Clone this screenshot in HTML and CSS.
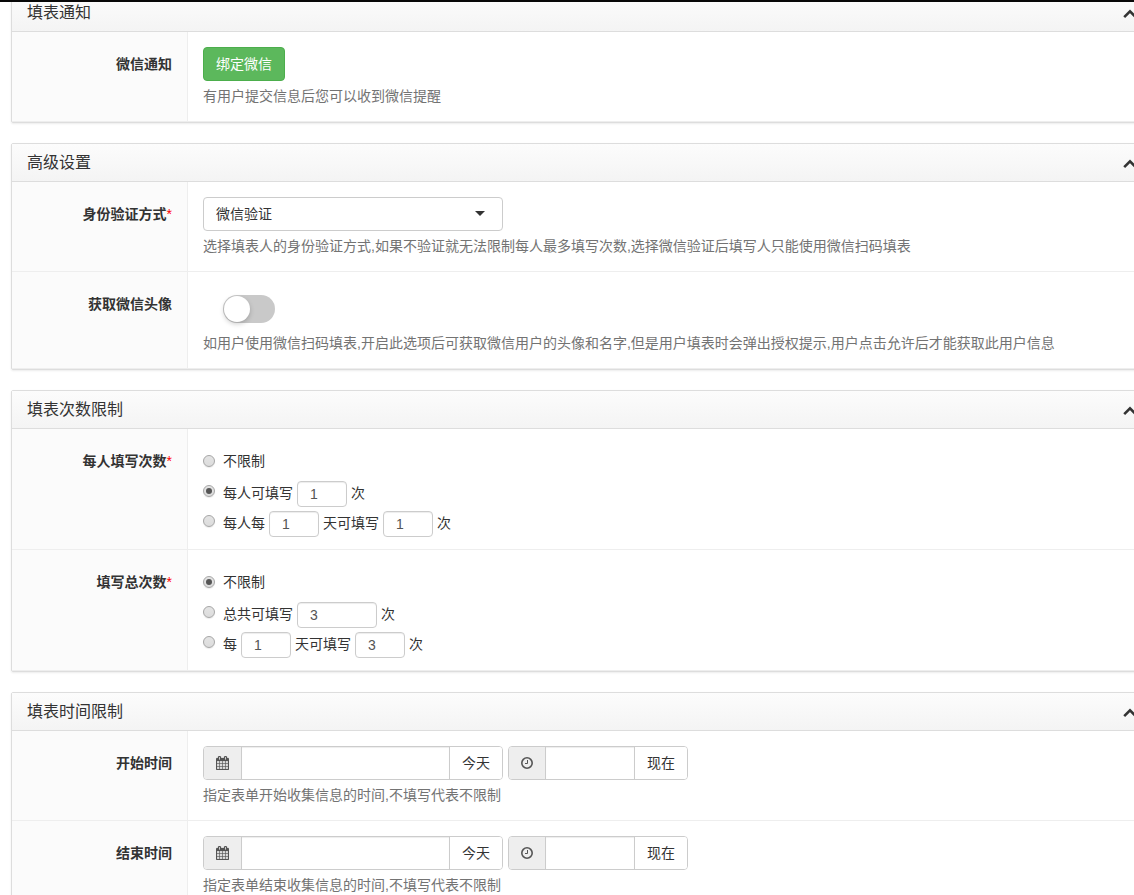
FILE: index.html
```html
<!DOCTYPE html>
<html lang="zh-CN">
<head>
<meta charset="utf-8">
<title>表单设置</title>
<link rel="stylesheet" href="styles.css">
</head>
<body>
<svg class="sprite" aria-hidden="true">
  <symbol id="chevron" viewBox="0 0 14 10"><path d="M1.2 8.2 7 2.4l5.8 5.8" fill="none" stroke="currentColor" stroke-width="2.6"/></symbol>
  <symbol id="calendar" viewBox="0 0 1664 1792"><path fill="currentColor" stroke="currentColor" stroke-width="30" d="M128 1664h288v-288h-288v288zm352 0h320v-288h-320v288zm-352-352h288v-320h-288v320zm352 0h320v-320h-320v320zm-352-384h288v-288h-288v288zm736 736h320v-288h-320v288zm-384-736h320v-288h-320v288zm768 736h288v-288h-288v288zm-384-352h320v-320h-320v320zm-352-864v-288q0-13-9.5-22.5t-22.5-9.5h-64q-13 0-22.5 9.5t-9.5 22.5v288q0 13 9.5 22.5t22.5 9.5h64q13 0 22.5-9.5t9.5-22.5zm736 864h288v-320h-288v320zm-384-384h320v-288h-320v288zm384 0h288v-288h-288v288zm32-480v-288q0-13-9.5-22.5t-22.5-9.5h-64q-13 0-22.5 9.5t-9.5 22.5v288q0 13 9.5 22.5t22.5 9.5h64q13 0 22.5-9.5t9.5-22.5zm384-64v1280q0 52-38 90t-90 38h-1408q-52 0-90-38t-38-90v-1280q0-52 38-90t90-38h128v-96q0-66 47-113t113-47h64q66 0 113 47t47 113v96h384v-96q0-66 47-113t113-47h64q66 0 113 47t47 113v96h128q52 0 90 38t38 90z"/></symbol>
  <symbol id="clock" viewBox="0 0 12 12"><circle cx="6" cy="6" r="5.2" fill="none" stroke="currentColor" stroke-width="1.6"/><path d="M6.5 3v3.5H4" fill="none" stroke="currentColor" stroke-width="1"/></symbol>
</svg>
<div class="topbar"></div>
<main class="settings">
  <section class="panel">
    <header class="panel-head"><h2>填表通知</h2><button class="fold" type="button" aria-label="收起"><svg><use href="#chevron"/></svg></button></header>
    <div class="row">
      <div class="name">微信通知</div>
      <div class="field">
        <button class="btn-bind" type="button">绑定微信</button>
        <p class="help">有用户提交信息后您可以收到微信提醒</p>
      </div>
    </div>
  </section>

  <section class="panel">
    <header class="panel-head"><h2>高级设置</h2><button class="fold" type="button" aria-label="收起"><svg><use href="#chevron"/></svg></button></header>
    <div class="row">
      <label class="name" for="auth">身份验证方式<span class="req">*</span></label>
      <div class="field">
        <div class="select"><select id="auth"><option>微信验证</option></select></div>
        <p class="help">选择填表人的身份验证方式,如果不验证就无法限制每人最多填写次数,选择微信验证后填写人只能使用微信扫码填表</p>
      </div>
    </div>
    <div class="row">
      <label class="name" for="avatar">获取微信头像</label>
      <div class="field">
        <div class="switch-line"><input class="switch" id="avatar" type="checkbox"></div>
        <p class="help">如用户使用微信扫码填表,开启此选项后可获取微信用户的头像和名字,但是用户填表时会弹出授权提示,用户点击允许后才能获取此用户信息</p>
      </div>
    </div>
  </section>

  <section class="panel">
    <header class="panel-head"><h2>填表次数限制</h2><button class="fold" type="button" aria-label="收起"><svg><use href="#chevron"/></svg></button></header>
    <div class="row">
      <div class="name">每人填写次数<span class="req">*</span></div>
      <div class="field choices">
        <div class="choice"><input type="radio" name="each" id="e1"><label for="e1">不限制</label></div>
        <div class="choice tall"><input type="radio" name="each" id="e2" checked><label for="e2">每人可填写</label><input class="num" type="text" value="1" aria-label="每人次数"><span>次</span></div>
        <div class="choice tall"><input type="radio" name="each" id="e3"><label for="e3">每人每</label><input class="num" type="text" value="1" aria-label="天数"><span>天可填写</span><input class="num" type="text" value="1" aria-label="次数"><span>次</span></div>
      </div>
    </div>
    <div class="row">
      <div class="name">填写总次数<span class="req">*</span></div>
      <div class="field choices">
        <div class="choice"><input type="radio" name="total" id="t1" checked><label for="t1">不限制</label></div>
        <div class="choice tall"><input type="radio" name="total" id="t2"><label for="t2">总共可填写</label><input class="num wide" type="text" value="3" aria-label="总次数"><span>次</span></div>
        <div class="choice tall"><input type="radio" name="total" id="t3"><label for="t3">每</label><input class="num" type="text" value="1" aria-label="天数"><span>天可填写</span><input class="num" type="text" value="3" aria-label="次数"><span>次</span></div>
      </div>
    </div>
  </section>

  <section class="panel">
    <header class="panel-head"><h2>填表时间限制</h2><button class="fold" type="button" aria-label="收起"><svg><use href="#chevron"/></svg></button></header>
    <div class="row">
      <label class="name" for="start">开始时间</label>
      <div class="field">
        <div class="when">
          <div class="group date"><span class="addon"><svg class="i-cal"><use href="#calendar"/></svg></span><input id="start" type="text"><button type="button">今天</button></div>
          <div class="group time"><span class="addon"><svg class="i-clock"><use href="#clock"/></svg></span><input type="text" aria-label="开始时刻"><button type="button">现在</button></div>
        </div>
        <p class="help">指定表单开始收集信息的时间,不填写代表不限制</p>
      </div>
    </div>
    <div class="row">
      <label class="name" for="end">结束时间</label>
      <div class="field">
        <div class="when">
          <div class="group date"><span class="addon"><svg class="i-cal"><use href="#calendar"/></svg></span><input id="end" type="text"><button type="button">今天</button></div>
          <div class="group time"><span class="addon"><svg class="i-clock"><use href="#clock"/></svg></span><input type="text" aria-label="结束时刻"><button type="button">现在</button></div>
        </div>
        <p class="help">指定表单结束收集信息的时间,不填写代表不限制</p>
      </div>
    </div>
  </section>
</main>
</body>
</html>
```

FILE: styles.css
```css
* { box-sizing: border-box; }
html { overflow: hidden; }
body {
  margin: 0;
  overflow: hidden;
  background: #fff;
  color: #333;
  font: 14px/20px "Liberation Sans", "Noto Sans CJK SC", sans-serif;
}
input, select, button { font: inherit; color: inherit; margin: 0; }
.sprite { display: none; }
.topbar { position: relative; z-index: 1; height: 2px; background: #080808; }

/* The panels run under the top bar and past the right edge of the window */
.settings { margin: -9px -19px 0 11px; }

.panel {
  margin-bottom: 20px;
  border: 1px solid #ddd;
  border-radius: 2px;
  box-shadow: 0 1px 2px rgba(0, 0, 0, .08);
}
.panel-head {
  display: flex;
  align-items: center;
  justify-content: space-between;
  height: 38px;
  padding: 0 15px;
  border-bottom: 1px solid #ddd;
  background: linear-gradient(#fcfcfc, #f4f4f4);
}
.panel-head h2 { margin: 0; font-size: 16px; font-weight: 400; }
.fold { display: flex; padding: 3px 0 0; border: 0; background: none; }
.fold svg { width: 14px; height: 10px; }

.row { display: flex; border-bottom: 1px solid #eee; }
.name {
  flex: 0 0 176px;
  padding: 22px 15px 0;
  border-right: 1px solid #eee;
  background: #fbfbfb;
  font-weight: 700;
  text-align: right;
}
.req { color: #f00; font-weight: 400; }
.field { flex: 1; min-width: 0; padding: 15px; }
.help { margin: 5px 0 0; color: #737373; }

.btn-bind {
  display: block;
  height: 34px;
  padding: 0 12px;
  border: 1px solid #4cae4c;
  border-radius: 4px;
  background: #5cb85c;
  color: #fff;
}

.select { position: relative; width: 300px; }
.select select {
  display: block;
  width: 100%;
  height: 34px;
  padding: 0 12px;
  border: 1px solid #ccc;
  border-radius: 4px;
  background: #fff;
  appearance: none;
}
.select::after {
  content: "";
  position: absolute;
  right: 18px;
  top: 14px;
  border: 5px solid transparent;
  border-top-color: #333;
  border-bottom: 0;
  pointer-events: none;
}

.switch-line { display: flex; padding: 8px 20px 5px; }
.switch {
  width: 52px;
  height: 28px;
  border-radius: 14px;
  background: #c9c9c9;
  appearance: none;
}
.switch::before {
  content: "";
  display: block;
  width: 26px;
  height: 26px;
  margin: 1px;
  border-radius: 50%;
  background: #fff;
  box-shadow: 0 2px 5px rgba(0, 0, 0, .2);
}

.choices { display: grid; gap: 4px; padding: 22px 15px 12px; }
.choice { display: flex; align-items: center; gap: 4px; }
.choice:first-child { margin-bottom: 6px; }
.tall label, .tall span { padding-bottom: 2px; }
.choice [type="radio"] {
  align-self: flex-start;
  display: grid;
  place-items: center;
  width: 12px;
  height: 12px;
  margin: 4px 4px 0 0;
  border: 1px solid #a6a6a6;
  border-radius: 50%;
  background: linear-gradient(#e4e4e4, #dcdcdc);
  box-shadow: 0 1px 1px rgba(0, 0, 0, .08);
  appearance: none;
}
.choice [type="radio"]:checked::before {
  content: "";
  width: 6px;
  height: 6px;
  border-radius: 50%;
  background: #555;
}
.num {
  width: 50px;
  height: 26px;
  padding: 0 12px;
  border: 1px solid #ccc;
  border-radius: 4px;
  background: #fff;
  color: #555;
  box-shadow: inset 0 1px 1px rgba(0, 0, 0, .075);
}
.num.wide { width: 80px; }

.when { display: flex; gap: 5px; }
.group { display: flex; height: 34px; border: 1px solid #ccc; border-radius: 4px; overflow: hidden; }
.date { width: 300px; }
.time { width: 180px; }
.addon { display: flex; align-items: center; justify-content: center; padding: 0 12px; background: #eee; color: #555; }
.i-cal { width: 13px; height: 14px; }
.i-clock { width: 12px; height: 12px; }
.group input {
  flex: 1;
  min-width: 0;
  padding: 0 12px;
  border: solid #ccc;
  border-width: 0 1px;
  background: #fff;
  box-shadow: inset 0 1px 1px rgba(0, 0, 0, .075);
}
.group button { padding: 0 12px; border: 0; background: #fff; }
```
